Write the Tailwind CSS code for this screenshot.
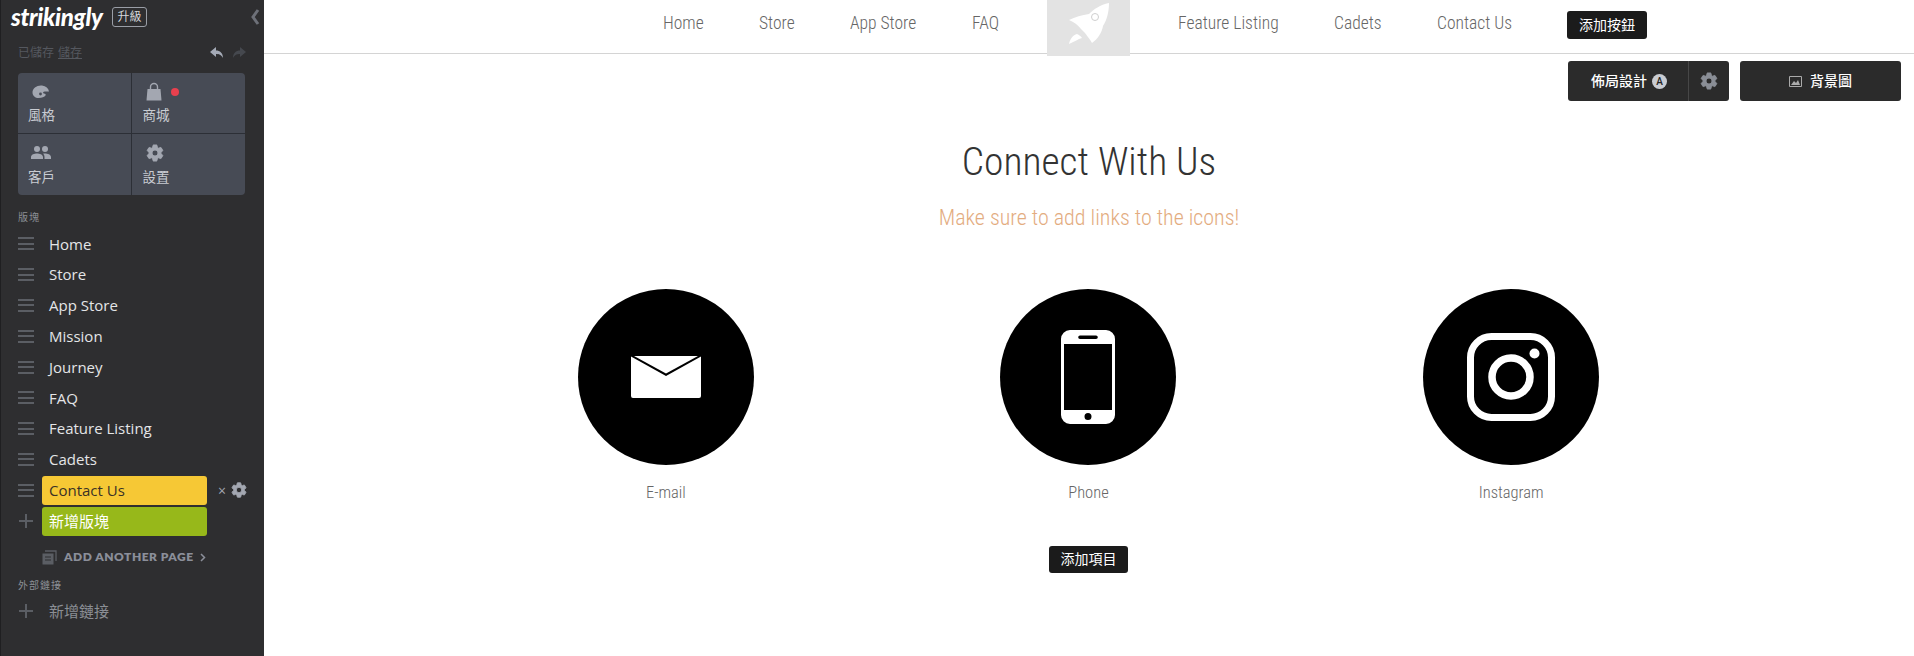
<!DOCTYPE html>
<html lang="en">
<head>
  <meta charset="UTF-8" />
  <title>Strikingly Editor</title>
  <script src="https://cdn.jsdelivr.net/npm/@tailwindcss/browser@4"></script>
</head>
<body class="bg-white overflow-hidden font-['Open_Sans','Noto_Sans_CJK_TC',sans-serif]">
<div class="flex h-[656px] w-[1914px]">

  <!-- sidebar -->
  <aside class="w-[264px] shrink-0 h-full bg-[#2e2e30] border-l border-[#1f1f21] flex flex-col relative">
    <div class="flex items-center h-[33px] pl-[10px] pt-[1px]">
      <span class="font-['Lato',sans-serif] font-black italic text-[24px] tracking-[-0.3px] text-white w-[101px] leading-none">strikingly</span>
      <span class="h-[20px] w-[35px] border border-[#9a9ea6] rounded-[3px] text-[12px] leading-[18px] text-center text-[#d5d7db]">升級</span>
      <svg class="ml-auto mr-[4px]" width="10" height="18" viewBox="0 0 10 18"><path d="M8 2 3 9l5 7" fill="none" stroke="#6d7078" stroke-width="3"/></svg>
    </div>
    <div class="flex items-center h-[40px] pl-[17px] pr-[17px] text-[12px] text-[#55585f]">
      <span>已儲存</span><span class="ml-[4px] underline">儲存</span>
      <svg class="ml-auto" width="16" height="14" viewBox="0 0 16 14"><path d="M7 1 1 6l6 5V8c3 0 5 .6 7 4 0-5-3-7.500-7-7.500z" fill="#a4aab6"/></svg>
      <svg class="ml-[6px]" width="16" height="14" viewBox="0 0 16 14"><path d="M9 1l6 5-6 5V8c-3 0-5 .6-7 4 0-5 3-7.500 7-7.500z" fill="#45484e"/></svg>
    </div>
    <div class="ml-[17px] w-[227px] h-[122px] rounded-[4px] bg-[#474b55] grid grid-cols-2 grid-rows-2 text-[13.500px] text-[#c9ccd2]">
      <div class="border-r border-b border-[#2c2f36] pl-[10px] pt-[9px]">
        <svg class="ml-[3px]" width="20" height="20" viewBox="0 0 20 20"><path d="M11 3.500C6 3 1.500 6 1.500 10.500c0 3.500 3 5.500 6 5.500 3.500 0 6-1 7-2.500.8-1.200-.5-2-1.500-2-1 0-1.300-1.200-.3-1.700 1-.5 3-.5 5.300-.3C17.500 6 15 4 11 3.500z" fill="#a3a7b1"/><circle cx="9.500" cy="12" r="1.400" fill="#474b55"/></svg>
        <div class="leading-[18px] mt-[4px]">風格</div>
      </div>
      <div class="border-b border-[#2c2f36] pl-[11px] pt-[9px]">
        <div class="flex items-center h-[20px] pl-[3px]">
          <svg width="16" height="20" viewBox="0 0 16 20"><path d="M1.500 7h13l1 11.500H.5z" fill="#a3a7b1"/><path d="M4.500 9V5a3.500 3.500 0 0 1 7 0v4" fill="none" stroke="#a3a7b1" stroke-width="1.400"/></svg>
          <span class="ml-[9px] w-[8px] h-[8px] rounded-full bg-[#e8404e]"></span>
        </div>
        <div class="leading-[18px] mt-[4px]">商城</div>
      </div>
      <div class="border-r border-[#2c2f36] pl-[10px] pt-[9px]">
        <svg class="ml-[2px]" width="22" height="20" viewBox="0 0 22 20"><circle cx="7" cy="6" r="3" fill="#a3a7b1"/><circle cx="15" cy="6" r="3" fill="#a3a7b1"/><path d="M1 16v-2c0-2.500 3.500-3.500 6-3.500s6 1 6 3.500v2zM14.500 16v-2c0-1.500-.6-2.600-1.500-3.300.7-.1 1.400-.2 2-.2 2.500 0 6 1 6 3.500v2z" fill="#a3a7b1"/></svg>
        <div class="leading-[18px] mt-[5px]">客戶</div>
      </div>
      <div class="pl-[11px] pt-[9px]">
        <svg class="ml-[2px]" width="20" height="20" viewBox="0 0 24 24"><path d="M19.140 12.940c.04-.3.06-.61.06-.94 0-.32-.02-.64-.07-.94l2.030-1.580c.18-.14.23-.41.12-.61l-1.920-3.320c-.12-.22-.37-.29-.59-.22l-2.390.96c-.5-.38-1.030-.7-1.620-.94l-.36-2.540c-.04-.24-.24-.41-.48-.41h-3.840c-.24 0-.43.17-.47.41l-.36 2.540c-.59.24-1.130.57-1.620.94l-2.390-.96c-.22-.08-.47 0-.59.22L2.740 8.870c-.12.21-.08.47.12.61l2.030 1.580c-.05.3-.09.63-.09.94s.02.64.07.94l-2.030 1.580c-.18.14-.23.41-.12.61l1.920 3.320c.12.22.37.29.59.22l2.390-.96c.5.38 1.030.7 1.620.94l.36 2.540c.05.24.24.41.48.41h3.840c.24 0 .44-.17.47-.41l.36-2.540c.59-.24 1.130-.56 1.620-.94l2.390.96c.22.08.47 0 .59-.22l1.920-3.320c.12-.22.07-.47-.12-.61l-2.010-1.580zM12 15.600c-1.980 0-3.600-1.620-3.600-3.600s1.620-3.600 3.600-3.600 3.600 1.620 3.600 3.600-1.620 3.600-3.600 3.600z" fill="#a3a7b1" stroke="#a3a7b1" stroke-width="1.200"/></svg>
        <div class="leading-[18px] mt-[5px]">設置</div>
      </div>
    </div>

    <div class="pl-[17px] mt-[14px] h-[16px] text-[10px] leading-[16px] text-[#8b8e95] tracking-[1px]">版塊</div>

    <div class="mt-[3.500px] text-[15px] text-[#e4e5e7]">
      <div class="flex items-center h-[30.8px]"><span class="w-[16px] h-[13px] ml-[17px] border-y-2 border-[#5b5e64] relative after:absolute after:left-0 after:right-0 after:top-[3.500px] after:h-[2px] after:bg-[#5b5e64]"></span><span class="ml-[15px]">Home</span></div>
      <div class="flex items-center h-[30.8px]"><span class="w-[16px] h-[13px] ml-[17px] border-y-2 border-[#5b5e64] relative after:absolute after:left-0 after:right-0 after:top-[3.500px] after:h-[2px] after:bg-[#5b5e64]"></span><span class="ml-[15px]">Store</span></div>
      <div class="flex items-center h-[30.8px]"><span class="w-[16px] h-[13px] ml-[17px] border-y-2 border-[#5b5e64] relative after:absolute after:left-0 after:right-0 after:top-[3.500px] after:h-[2px] after:bg-[#5b5e64]"></span><span class="ml-[15px]">App Store</span></div>
      <div class="flex items-center h-[30.8px]"><span class="w-[16px] h-[13px] ml-[17px] border-y-2 border-[#5b5e64] relative after:absolute after:left-0 after:right-0 after:top-[3.500px] after:h-[2px] after:bg-[#5b5e64]"></span><span class="ml-[15px]">Mission</span></div>
      <div class="flex items-center h-[30.8px]"><span class="w-[16px] h-[13px] ml-[17px] border-y-2 border-[#5b5e64] relative after:absolute after:left-0 after:right-0 after:top-[3.500px] after:h-[2px] after:bg-[#5b5e64]"></span><span class="ml-[15px]">Journey</span></div>
      <div class="flex items-center h-[30.8px]"><span class="w-[16px] h-[13px] ml-[17px] border-y-2 border-[#5b5e64] relative after:absolute after:left-0 after:right-0 after:top-[3.500px] after:h-[2px] after:bg-[#5b5e64]"></span><span class="ml-[15px]">FAQ</span></div>
      <div class="flex items-center h-[30.8px]"><span class="w-[16px] h-[13px] ml-[17px] border-y-2 border-[#5b5e64] relative after:absolute after:left-0 after:right-0 after:top-[3.500px] after:h-[2px] after:bg-[#5b5e64]"></span><span class="ml-[15px]">Feature Listing</span></div>
      <div class="flex items-center h-[30.8px]"><span class="w-[16px] h-[13px] ml-[17px] border-y-2 border-[#5b5e64] relative after:absolute after:left-0 after:right-0 after:top-[3.500px] after:h-[2px] after:bg-[#5b5e64]"></span><span class="ml-[15px]">Cadets</span></div>
      <div class="flex items-center h-[30.8px]">
        <span class="w-[16px] h-[13px] ml-[17px] border-y-2 border-[#5b5e64] relative after:absolute after:left-0 after:right-0 after:top-[3.500px] after:h-[2px] after:bg-[#5b5e64]"></span>
        <span class="ml-[8px] w-[165px] h-[29px] rounded-[3px] bg-[#f6c835] text-[#3a3226] pl-[7px] leading-[29px]">Contact Us</span>
        <span class="ml-[11px] text-[14px] text-[#a3a7b1]">×</span>
        <svg class="ml-[4px]" width="18" height="18" viewBox="0 0 24 24"><path d="M19.140 12.940c.04-.3.06-.61.06-.94 0-.32-.02-.64-.07-.94l2.030-1.580c.18-.14.23-.41.12-.61l-1.920-3.320c-.12-.22-.37-.29-.59-.22l-2.390.96c-.5-.38-1.030-.7-1.620-.94l-.36-2.540c-.04-.24-.24-.41-.48-.41h-3.840c-.24 0-.43.17-.47.41l-.36 2.540c-.59.24-1.130.57-1.620.94l-2.390-.96c-.22-.08-.47 0-.59.22L2.740 8.870c-.12.21-.08.47.12.61l2.030 1.580c-.05.3-.09.63-.09.94s.02.64.07.94l-2.030 1.580c-.18.14-.23.41-.12.61l1.920 3.320c.12.22.37.29.59.22l2.390-.96c.5.38 1.030.7 1.620.94l.36 2.540c.05.24.24.41.48.41h3.840c.24 0 .44-.17.47-.41l.36-2.540c.59-.24 1.130-.56 1.620-.94l2.390.96c.22.08.47 0 .59-.22l1.920-3.320c.12-.22.07-.47-.12-.61l-2.010-1.580zM12 15.600c-1.980 0-3.600-1.620-3.600-3.600s1.620-3.600 3.600-3.600 3.600 1.620 3.600 3.600-1.620 3.600-3.600 3.600z" fill="#a3a7b1" stroke="#a3a7b1" stroke-width="1.200"/></svg>
      </div>
      <div class="flex items-center h-[30.8px]">
        <svg class="ml-[18px]" width="14" height="14" viewBox="0 0 14 14"><path d="M7 0v14M0 7h14" stroke="#5b5e64" stroke-width="2"/></svg>
        <span class="ml-[9px] w-[165px] h-[29px] rounded-[3px] bg-[#97b81a] text-white pl-[7px] leading-[29px]">新增版塊</span>
      </div>
    </div>

    <div class="flex items-center pl-[41px] h-[20px] mt-[11px]">
      <svg width="15" height="15" viewBox="0 0 15 15"><path d="M3 1h11v10" fill="none" stroke="#5b5e64" stroke-width="1.300"/><path d="M0.500 3.500h11v11h-11z" fill="#5b5e64"/><path d="M3 7h6M3 10h6" stroke="#2e2e30"/></svg>
      <span class="ml-[7px] font-['Lato',sans-serif] font-extrabold text-[12px] tracking-[0.5px] text-[#8b8f9a]">ADD ANOTHER PAGE</span>
      <svg class="ml-[6px]" width="6" height="9" viewBox="0 0 6 9"><path d="M1 1l3.500 3.500L1 8" fill="none" stroke="#8b8f9a" stroke-width="1.500"/></svg>
    </div>

    <div class="pl-[17px] mt-[10px] h-[16px] text-[10px] leading-[16px] text-[#8b8e95] tracking-[1px]">外部鏈接</div>
    <div class="flex items-center h-[30px] mt-[3px] text-[15px] text-[#8b8e95]">
      <svg class="ml-[18px]" width="14" height="14" viewBox="0 0 14 14"><path d="M7 0v14M0 7h14" stroke="#5b5e64" stroke-width="2"/></svg>
      <span class="ml-[16px]">新增鏈接</span>
    </div>
  </aside>

  <!-- main -->
  <main class="flex-1 min-w-0 relative font-['Roboto','Noto_Sans_CJK_TC',sans-serif]">
    <header class="h-[54px] border-b border-[#d4d4d4] flex items-center pl-[399px] text-[17.500px] font-light text-[#666] [font-stretch:75%]">
      <a class="w-[41px] whitespace-nowrap -mt-[6px]">Home</a>
      <a class="ml-[55px] w-[36px] whitespace-nowrap -mt-[6px]">Store</a>
      <a class="ml-[55px] w-[67px] whitespace-nowrap -mt-[6px]">App Store</a>
      <a class="ml-[55px] w-[27px] whitespace-nowrap -mt-[6px]">FAQ</a>
      <div class="ml-[48px] w-[83px] h-[56px] self-start bg-[#e3e3e3] relative z-10 pl-[20px] pt-[2px]">
        <svg width="44" height="44" viewBox="0 0 44 44"><path d="M42 1C33 3 27 7 22 12 15 13 8 15 2 18c5 2 9 5 12 9l4 4c2 3 5 6 7 10 6-4 10-11 11-17 4-6 6-15 6-23z" fill="#fff"/><circle cx="28" cy="15" r="3.500" fill="none" stroke="#cfcfcf" stroke-width="1"/><path d="M2 42c1-5 4-9 8-10 2 1 4 2 5 4-4 1-8 4-13 6z" fill="#fff"/></svg>
      </div>
      <a class="ml-[48px] w-[101px] whitespace-nowrap -mt-[6px]">Feature Listing</a>
      <a class="ml-[55px] w-[47px] whitespace-nowrap -mt-[6px]">Cadets</a>
      <a class="ml-[56px] w-[75px] whitespace-nowrap -mt-[6px]">Contact Us</a>
      <span class="ml-[55px] w-[80px] h-[28px] rounded-[3px] bg-[#1b1b1b] text-white text-[14px] font-normal leading-[28px] text-center -mt-[4px]">添加按鈕</span>
    </header>

    <div class="absolute top-[61px] left-[1304px] flex gap-[11px] text-[14px] text-white font-medium">
      <div class="w-[161px] h-[40px] rounded-[3px] bg-[#2b2b2b] flex items-center">
        <span class="ml-[23px]">佈局設計</span>
        <span class="ml-[5px] w-[15px] h-[15px] rounded-full bg-[#c9ccd2] text-[#222] text-[10px] leading-[15px] text-center">A</span>
        <span class="ml-[21px] w-px h-[40px] bg-[#474747]"></span>
        <svg class="ml-[10px]" width="20" height="20" viewBox="0 0 24 24"><path d="M19.140 12.940c.04-.3.06-.61.06-.94 0-.32-.02-.64-.07-.94l2.030-1.580c.18-.14.23-.41.12-.61l-1.920-3.320c-.12-.22-.37-.29-.59-.22l-2.390.96c-.5-.38-1.030-.7-1.620-.94l-.36-2.540c-.04-.24-.24-.41-.48-.41h-3.840c-.24 0-.43.17-.47.41l-.36 2.540c-.59.24-1.130.57-1.620.94l-2.390-.96c-.22-.08-.47 0-.59.22L2.740 8.870c-.12.21-.08.47.12.61l2.030 1.580c-.05.3-.09.63-.09.94s.02.64.07.94l-2.030 1.580c-.18.14-.23.41-.12.61l1.920 3.320c.12.22.37.29.59.22l2.390-.96c.5.38 1.030.7 1.620.94l.36 2.540c.05.24.24.41.48.41h3.840c.24 0 .44-.17.47-.41l.36-2.540c.59-.24 1.130-.56 1.620-.94l2.390.96c.22.08.47 0 .59-.22l1.920-3.320c.12-.22.07-.47-.12-.61l-2.010-1.580zM12 15.600c-1.980 0-3.600-1.620-3.600-3.600s1.620-3.600 3.600-3.600 3.600 1.620 3.600 3.600-1.620 3.600-3.600 3.600z" fill="#8a8e96" stroke="#8a8e96" stroke-width="1.200"/></svg>
      </div>
      <div class="w-[161px] h-[40px] rounded-[3px] bg-[#2b2b2b] flex items-center justify-center gap-[8px]">
        <svg width="13" height="11" viewBox="0 0 13 11"><path d="M.5.5h12v10H.5z" fill="none" stroke="#aaa"/><path d="M2 9l3-4 2 2 2-3 2 5z" fill="#aaa"/></svg>
        <span>背景圖</span>
      </div>
    </div>

    <section class="flex flex-col items-center">
      <h1 class="mt-[83px] text-[39.500px] leading-[50px] font-light text-[#333] [font-stretch:75%]">Connect With Us</h1>
      <p class="mt-[16px] text-[22px] leading-[30px] font-light text-[#e3ac7f] [font-stretch:75%]">Make sure to add links to the icons!</p>

      <div class="mt-[56px] mr-[1px] w-[1268px] grid grid-cols-3 text-center text-[16.500px] font-light text-[#666] [font-stretch:75%]">
        <div class="flex flex-col items-center">
          <div class="w-[176px] h-[176px] rounded-full bg-black flex items-center justify-center">
            <svg width="74" height="44" viewBox="0 0 74 44"><path d="M2 1.500 37 21 72 1.500V41a2 2 0 0 1-2 2H4a2 2 0 0 1-2-2z" fill="#fff"/><path d="M5 1h64L37 18.500z" fill="#fff"/></svg>
          </div>
          <div class="mt-[16px] leading-[24px]">E-mail</div>
        </div>
        <div class="flex flex-col items-center">
          <div class="w-[176px] h-[176px] rounded-full bg-black flex items-center justify-center">
            <svg width="56" height="96" viewBox="0 0 56 96"><path fill-rule="evenodd" d="M10 1h36a9 9 0 0 1 9 9v76a9 9 0 0 1-9 9H10a9 9 0 0 1-9-9V10a9 9 0 0 1 9-9zM4 15v66h48V15zM20 6.500a1.800 1.800 0 0 0 0 3.600h16a1.800 1.800 0 0 0 0-3.600zM28 84a3.500 3.500 0 1 0 0 7 3.500 3.500 0 0 0 0-7z" fill="#fff"/></svg>
          </div>
          <div class="mt-[16px] leading-[24px]">Phone</div>
        </div>
        <div class="flex flex-col items-center">
          <div class="w-[176px] h-[176px] rounded-full bg-black flex items-center justify-center">
            <svg width="88" height="88" viewBox="0 0 88 88"><rect x="3.500" y="3.500" width="81" height="81" rx="21" fill="none" stroke="#fff" stroke-width="7"/><circle cx="44" cy="44" r="19" fill="none" stroke="#fff" stroke-width="7.500"/><circle cx="67.500" cy="20.500" r="5" fill="#fff"/></svg>
          </div>
          <div class="mt-[16px] leading-[24px]">Instagram</div>
        </div>
      </div>

      <span class="mt-[41px] mr-[1px] w-[79px] h-[27px] rounded-[3px] bg-[#1b1b1b] text-white text-[14px] leading-[27px] text-center">添加項目</span>
    </section>
  </main>
</div>
</body>
</html>
